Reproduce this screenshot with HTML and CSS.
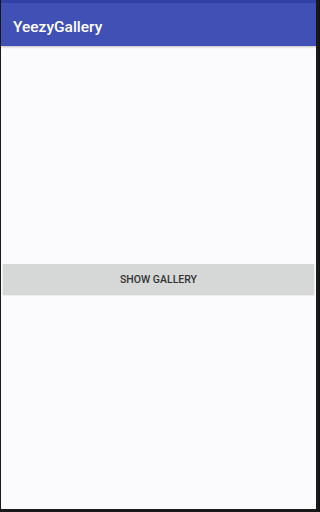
FILE: index.html
```html
<!DOCTYPE html>
<html>
<head>
<meta charset="utf-8">
<link rel="stylesheet" href="styles.css">
</head>
<body>
<div class="frame">
  <div class="screen">
    <div class="statusbar"></div>
    <header class="toolbar"><span class="title">YeezyGallery</span></header>
    <main class="content">
      <button class="btn">SHOW GALLERY</button>
    </main>
  </div>
</div>
</body>
</html>
```
FILE: styles.css
```css
html, body { margin: 0; padding: 0; }
body { background: #111; width: 319px; height: 512px; overflow: hidden; font-family: Roboto, "Liberation Sans", sans-serif; }
.frame { width: 319px; height: 512px; padding: 0 3px 3px 1px; box-sizing: border-box; background: #1a1a1a; }
.screen { width: 315px; height: 509px; background: #fbfafc; display: flex; flex-direction: column; }
.statusbar { height: 3px; background: #3241a6; flex: none; }
.toolbar { height: 43px; background: #4050b5; flex: none; display: flex; align-items: center; padding-left: 12px; box-shadow: 0 1px 2px rgba(0,0,0,0.25); }
.title { color: #fff; font-size: 15.5px; font-weight: 500; margin-top: 4px; }
.content { flex: 1; display: flex; align-items: center; padding: 0 2px; }
.btn { width: 311px; height: 30px; margin-top: 3px; border: none; background: #d6d7d7; color: #333; font-family: Roboto, "Liberation Sans", sans-serif; font-size: 10.5px; font-weight: 500; letter-spacing: 0; box-shadow: 0 1px 1.5px rgba(0,0,0,0.2); padding: 0; }
```
